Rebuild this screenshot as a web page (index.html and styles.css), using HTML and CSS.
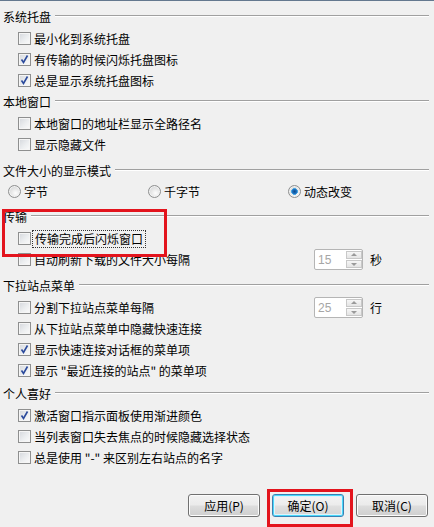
FILE: index.html
```html
<!DOCTYPE html>
<html>
<head>
<meta charset="utf-8">
<link rel="stylesheet" href="styles.css">
</head>
<body>
<div class="dlg">
  <div class="hdr h1"><span>系统托盘</span><span class="line"></span></div>
  <div class="row"><span class="cb"></span><span>最小化到系统托盘</span></div>
  <div class="row"><span class="cb on"><svg viewBox="0 0 13 13"><path d="M3.5 6.5 L5.5 9.5 L9.5 2.5" fill="none" stroke="#2b4a9c" stroke-width="1.6"/></svg></span><span>有传输的时候闪烁托盘图标</span></div>
  <div class="row"><span class="cb on"><svg viewBox="0 0 13 13"><path d="M3.5 6.5 L5.5 9.5 L9.5 2.5" fill="none" stroke="#2b4a9c" stroke-width="1.6"/></svg></span><span>总是显示系统托盘图标</span></div>

  <div class="hdr"><span>本地窗口</span><span class="line"></span></div>
  <div class="row"><span class="cb"></span><span>本地窗口的地址栏显示全路径名</span></div>
  <div class="row"><span class="cb"></span><span>显示隐藏文件</span></div>

  <div class="hdr h3"><span>文件大小的显示模式</span><span class="line"></span></div>
  <div class="radios">
    <div class="ropt"><span class="rd"></span><span>字节</span></div>
    <div class="ropt"><span class="rd"></span><span>千字节</span></div>
    <div class="ropt"><span class="rd sel"></span><span>动态改变</span></div>
  </div>

  <div class="hdr h4"><span>传输</span><span class="line"></span></div>
  <div class="row"><span class="cb"></span><span class="focus">传输完成后闪烁窗口</span></div>
  <div class="row spinrow">
    <div class="lbl"><span class="cb"></span><span>自动刷新下载的文件大小每隔</span></div>
    <div class="spinwrap"><div class="spin"><span class="val">15</span><span class="arrows"><span class="up"></span><span class="dn"></span></span></div><span>秒</span></div>
  </div>

  <div class="hdr h5"><span>下拉站点菜单</span><span class="line"></span></div>
  <div class="row spinrow">
    <div class="lbl"><span class="cb"></span><span>分割下拉站点菜单每隔</span></div>
    <div class="spinwrap"><div class="spin"><span class="val">25</span><span class="arrows"><span class="up"></span><span class="dn"></span></span></div><span>行</span></div>
  </div>
  <div class="row"><span class="cb"></span><span>从下拉站点菜单中隐藏快速连接</span></div>
  <div class="row"><span class="cb on"><svg viewBox="0 0 13 13"><path d="M3.5 6.5 L5.5 9.5 L9.5 2.5" fill="none" stroke="#2b4a9c" stroke-width="1.6"/></svg></span><span>显示快速连接对话框的菜单项</span></div>
  <div class="row"><span class="cb on"><svg viewBox="0 0 13 13"><path d="M3.5 6.5 L5.5 9.5 L9.5 2.5" fill="none" stroke="#2b4a9c" stroke-width="1.6"/></svg></span><span>显示 "最近连接的站点" 的菜单项</span></div>

  <div class="hdr h6"><span>个人喜好</span><span class="line"></span></div>
  <div class="row"><span class="cb on"><svg viewBox="0 0 13 13"><path d="M3.5 6.5 L5.5 9.5 L9.5 2.5" fill="none" stroke="#2b4a9c" stroke-width="1.6"/></svg></span><span>激活窗口指示面板使用渐进颜色</span></div>
  <div class="row"><span class="cb"></span><span>当列表窗口失去焦点的时候隐藏选择状态</span></div>
  <div class="row"><span class="cb"></span><span>总是使用 "-" 来区别左右站点的名字</span></div>

  <div class="footer">
    <button class="btn">应用(<u>P</u>)</button>
    <button class="btn def">确定(<u>O</u>)</button>
    <button class="btn">取消(<u>C</u>)</button>
  </div>
</div>
<div class="redbox rb1"></div>
<div class="redbox rb2"></div>
</body>
</html>
```

FILE: styles.css
```css
html, body {
  margin: 0;
  padding: 0;
}
body {
  position: relative;
  width: 434px;
  height: 527px;
  overflow: hidden;
  background: #f0f0f0;
  font-family: "Noto Sans CJK SC", "Liberation Sans", sans-serif;
  font-size: 12px;
  color: #000;
  border-top: 1px solid #64788f;
  box-sizing: border-box;
}
.dlg {
  display: flex;
  flex-direction: column;
  padding-top: 5px;
}
.hdr {
  display: flex;
  align-items: center;
  height: 22px;
  padding-left: 3px;
  padding-right: 5px;
  line-height: 14px;
}
.hdr .line {
  flex: 1;
  margin-left: 4px;
  margin-bottom: 3px;
  border-top: 1px solid #a0a0a0;
  border-bottom: 1px solid #ffffff;
}
.h3 { margin-top: 5px; }
.h4 { margin-top: 5px; }
.h5 { margin-top: 5px; }
.h6 { margin-top: 2px; }
.row {
  display: flex;
  align-items: center;
  height: 21px;
  padding-left: 18px;
  gap: 3px;
  line-height: 14px;
}
.cb {
  position: relative;
  flex: none;
  width: 13px;
  height: 13px;
  box-sizing: border-box;
  border: 1px solid #8e8f8f;
  background: linear-gradient(135deg, #d4d7dc 0%, #eceef0 55%, #fbfbfb 100%);
  box-shadow: inset 0 0 0 1px #f5f5f5;
}
.cb svg {
  position: absolute;
  left: -1px;
  top: -1px;
  width: 13px;
  height: 13px;
}
.focus {
  outline: 1px dotted #333;
  outline-offset: 1px;
  padding: 0 1px;
}
.radios {
  display: grid;
  grid-template-columns: 140px 140px 140px;
  height: 19px;
  padding-left: 8px;
}
.ropt {
  display: flex;
  align-items: center;
  gap: 3px;
}
.rd {
  flex: none;
  width: 13px;
  height: 13px;
  box-sizing: border-box;
  border-radius: 50%;
  border: 1px solid #8e8f8f;
  background: radial-gradient(circle at 60% 65%, #fdfdfd 0%, #e6e6e6 45%, #c9cdd2 100%);
  box-shadow: inset 0 0 0 1px #f2f2f2;
}
.rd.sel {
  background:
    radial-gradient(circle at 50% 50%, #0c4a8a 0%, #1d6fbf 28%, #55b3ea 42%, transparent 44%),
    radial-gradient(circle at 60% 65%, #fdfdfd 0%, #e6e6e6 45%, #c9cdd2 100%);
}
.spinrow {
  display: grid;
  grid-template-columns: 296px auto;
  gap: 0;
}
.lbl {
  display: flex;
  align-items: center;
  gap: 3px;
}
.spinwrap {
  display: flex;
  align-items: center;
  gap: 7px;
}
.spin {
  display: flex;
  align-items: center;
  justify-content: space-between;
  width: 49px;
  height: 21px;
  box-sizing: border-box;
  border: 1px solid #b5b5b5;
  border-radius: 2px;
  background: #fff;
  padding: 1px 0 1px 3px;
}
.val {
  color: #a6a6a6;
  font-family: "Liberation Sans", sans-serif;
  font-size: 12px;
}
.arrows {
  display: flex;
  flex-direction: column;
  width: 16px;
  height: 17px;
  gap: 1px;
}
.arrows span {
  position: relative;
  flex: 1;
  box-sizing: border-box;
  border: 1px solid #c8c8c8;
  background: linear-gradient(#f6f6f6, #e4e4e4);
}
.arrows span::after {
  content: "";
  position: absolute;
  left: 50%;
  top: 50%;
  margin-left: -3px;
  border-left: 3px solid transparent;
  border-right: 3px solid transparent;
}
.arrows .up::after {
  margin-top: -2px;
  border-bottom: 3px solid #9a9a9a;
}
.arrows .dn::after {
  margin-top: -1px;
  border-top: 3px solid #9a9a9a;
}
.footer {
  display: flex;
  justify-content: flex-end;
  gap: 12px;
  padding-top: 26px;
  padding-right: 6px;
}
.btn {
  width: 72px;
  height: 23px;
  box-sizing: border-box;
  border: 1px solid #707070;
  border-radius: 3px;
  background: linear-gradient(#f2f2f2 0%, #ebebeb 48%, #dddddd 52%, #cfcfcf 100%);
  box-shadow: inset 0 0 0 1px #fcfcfc;
  font-family: "Noto Sans CJK SC", sans-serif;
  font-size: 12px;
  color: #000;
  padding: 0;
  line-height: 14px;
}
.btn u {
  text-decoration: none;
}
.btn.def {
  border-color: #3c7fb1;
  box-shadow: inset 0 0 0 1px #48d8fb, inset 0 0 0 2px #dff3fb;
  background: linear-gradient(#f4f4f4 0%, #ececec 48%, #e0e0e0 52%, #d4d4d4 100%);
}
.redbox {
  position: absolute;
  box-sizing: border-box;
  border: 3px solid #e3141d;
}
.rb1 {
  left: 2px;
  top: 208px;
  width: 165px;
  height: 48px;
}
.rb2 {
  left: 267px;
  top: 488px;
  width: 86px;
  height: 38px;
}
```
